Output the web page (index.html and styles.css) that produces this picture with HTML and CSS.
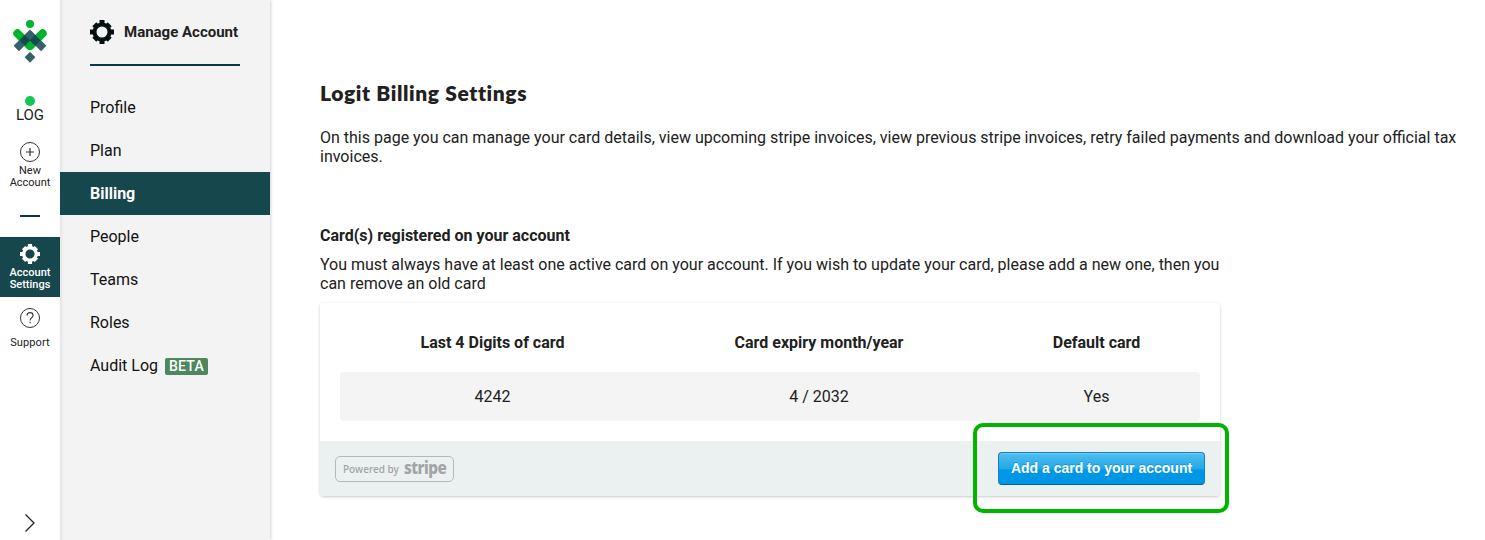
FILE: index.html
```html
<!DOCTYPE html>
<html lang="en">
<head>
<meta charset="utf-8">
<title>Logit Billing Settings</title>
<link rel="stylesheet" href="styles.css">
</head>
<body>
<svg width="0" height="0" class="defs" aria-hidden="true">
  <defs>
    <g id="gear" fill="none" stroke="currentColor">
      <circle cx="12" cy="12" r="7.500" stroke-width="4"/>
      <path d="M12 0v4M12 20v4M0 12h4M20 12h4" stroke-width="5"/>
      <path d="M4.300 4.300l2 2M17.700 17.700l2 2M4.300 19.700l2-2M17.700 6.300l2-2" stroke-width="5.6"/>
    </g>
  </defs>
</svg>
<div class="app">
  <nav class="rail">
    <svg class="logo" width="36" height="46" viewBox="12 18 36 46">
      <circle cx="30" cy="24" r="4" fill="#00b42d"/>
      <path d="M17.4 33.4L30 46L42.6 33.4" fill="none" stroke="#00b42d" stroke-width="8.2" stroke-linecap="round" stroke-linejoin="round"/>
      <path d="M16.300 48.500L30 34.800L43.700 48.500" fill="none" stroke="#366169" stroke-width="7.600"/>
      <path d="M19.700 40.400L25 35.100L30.300 40.400L25 45.700ZM29.700 40.400L35 35.100L40.300 40.400L35 45.700Z" fill="#124b50"/>
      <path d="M30 51.7L35.4 57.2L30 62.7L24.6 57.2Z" fill="#366169"/>
    </svg>
    <div class="rail-log"><span class="dot"></span>LOG</div>
    <a class="rail-item">
      <svg width="20" height="20" viewBox="0 0 20 20" fill="none" stroke="#333"><circle cx="10" cy="10" r="9.5"/><path d="M10 6v8M6 10h8" stroke-width="1.2"/></svg>
      New<br>Account
    </a>
    <span class="rail-rule"></span>
    <a class="rail-item rail-active">
      <svg width="20" height="20" viewBox="0 0 24 24"><use href="#gear"/></svg>
      Account<br>Settings
    </a>
    <a class="rail-item rail-support">
      <svg width="20" height="20" viewBox="0 0 20 20" fill="none" stroke="#333"><circle cx="10" cy="10" r="9.5"/><path d="M7 7.600C7 5.700 8.300 4.600 10 4.600s3.100 1.100 3.100 2.800c0 2.200-3 2.400-3 5.100M10.100 13.800v1.400" stroke-width="1.1"/></svg>
      Support
    </a>
    <svg class="expand" width="12" height="20" viewBox="0 0 12 20" fill="none" stroke="#222" stroke-width="1.3"><path d="M1.5 1.5L10 10l-8.500 8.500"/></svg>
  </nav>
  <aside class="side">
    <header class="side-head">
      <svg width="24" height="24" viewBox="0 0 24 24"><use href="#gear"/></svg>
      <span>Manage Account</span>
    </header>
    <a class="link">Profile</a>
    <a class="link">Plan</a>
    <a class="link link-active">Billing</a>
    <a class="link">People</a>
    <a class="link">Teams</a>
    <a class="link">Roles</a>
    <a class="link">Audit Log <span class="beta">BETA</span></a>
  </aside>
  <main class="main">
    <h1>Logit Billing Settings</h1>
    <p class="intro">On this page you can manage your card details, view upcoming stripe invoices, view previous stripe invoices, retry failed payments and download your official tax<br>invoices.</p>
    <section class="cards">
      <h2>Card(s) registered on your account</h2>
      <p class="note">You must always have at least one active card on your account. If you wish to update your card, please add a new one, then you<br>can remove an old card</p>
      <div class="panel">
        <div class="row row-head"><span>Last 4 Digits of card</span><span>Card expiry month/year</span><span>Default card</span></div>
        <div class="row row-data"><span>4242</span><span>4 / 2032</span><span>Yes</span></div>
        <footer class="panel-foot">
          <span class="powered">Powered by <b>stripe</b></span>
          <button class="add">Add a card to your account</button>
          <span class="highlight"></span>
        </footer>
      </div>
    </section>
  </main>
</div>
</body>
</html>
```
FILE: styles.css
```css
* { box-sizing: border-box; }
body { margin: 0; font: 16px/19px Roboto, sans-serif; color: #212121; background: #fff; }
h1, h2, p { margin: 0; }
.defs { display: block; }
.app { display: flex; height: 540px; overflow: hidden; }

.rail { width: 60px; flex: none; display: flex; flex-direction: column; align-items: center; padding-top: 18px; }
.logo { flex: none; }
.rail-log { display: flex; flex-direction: column; align-items: center; margin-top: 32px; height: 45px; font-size: 15px; line-height: 18px; }
.dot { width: 10px; height: 10px; border-radius: 50%; background: #14c653; flex: none; }
.rail-item { display: block; width: 60px; padding-top: 1px; text-align: center; font-size: 11px; line-height: 12px; }
.rail-item svg { display: block; margin: 0 auto 3px; }
.rail-rule { width: 20px; height: 2px; background: #083848; margin: 26px 0 20px; flex: none; }
.rail-active { height: 60px; padding-top: 7px; background: #16474c; color: #fff; font-weight: 500; flex: none; }
.rail-support { padding-top: 11px; letter-spacing: .1px; }
.rail-support svg { margin-bottom: 9px; }
.expand { margin: auto 0 7px; }

.side { width: 210px; flex: none; background: #f3f3f3; box-shadow: 1px 0 3px rgba(0, 40, 40, .2), inset 4px 0 3px -2px rgba(0, 0, 0, .06); }
.side-head { display: flex; align-items: center; gap: 10px; width: 150px; height: 46px; margin: 20px 30px; padding-bottom: 20px; border-bottom: 2px solid #083848; font-size: 15px; font-weight: 700; white-space: nowrap; }
.side-head svg { flex: none; color: #080f10; }
.link { display: flex; align-items: center; height: 43px; padding-left: 30px; color: #111; }
.link-active { background: #16474c; color: #fff; font-weight: 700; }
.beta { margin: 1px 0 0 7px; width: 43px; text-align: center; height: 17px; line-height: 17px; border-radius: 2px; background: #4d875d; color: #fff; font-size: 14px; font-weight: 500; letter-spacing: .2px; }

.main { flex: 1; padding: 79px 0 0 50px; white-space: nowrap; }
h1 { font: 800 21px/28px Lato, sans-serif; letter-spacing: .61px; font-variant-ligatures: none; }
.intro { margin-top: 21px; }
.cards { width: 900px; margin-top: 60px; }
h2 { font-size: 16px; line-height: 19px; font-weight: 700; }
.note { margin-top: 10px; }
.panel { margin-top: 10px; height: 193px; padding-top: 20px; border-radius: 4px; box-shadow: 0 1px 3px rgba(0, 0, 0, .22); display: flex; flex-direction: column; }
.row { display: grid; grid-template-columns: 305px 348px 207px; align-items: center; text-align: center; margin: 0 20px; }
.row-head { height: 39px; margin-bottom: 10px; font-weight: 700; }
.row-data { height: 49px; background: #f4f4f4; border-radius: 4px; }
.panel-foot { position: relative; display: flex; justify-content: space-between; align-items: center; height: 55px; margin-top: auto; padding: 0 15px; background: #ebf0f1; border-radius: 0 0 4px 4px; }
.powered { display: flex; align-items: center; gap: 5px; width: 119px; height: 26px; padding-left: 7px; border: 1px solid #b5b9ba; border-radius: 5px; color: #a1a4a5; font: 500 10px/24px "Noto Sans", sans-serif; letter-spacing: .02px; }
.powered b { font: 800 17px/20px "Noto Sans", sans-serif; letter-spacing: -.6px; transform: scaleX(.9); transform-origin: left; margin-top: -2px; }
.add { width: 207px; height: 33px; padding: 0 0 1px; border: 1px solid #0c83cc; border-bottom-color: #075d9c; border-radius: 4px; background: linear-gradient(#53bfef, #20a9e9 50%, #0097e7 55%, #0096e6); box-shadow: inset 0 1px 0 #72cbf2; color: #fff; font: 700 14px/29px "Liberation Sans", sans-serif; text-shadow: 0 -1px 0 rgba(0, 50, 100, .25); }
.highlight { position: absolute; left: 653px; top: -18px; width: 256px; height: 90px; border: 4px solid #00b400; border-radius: 10px; }
```
